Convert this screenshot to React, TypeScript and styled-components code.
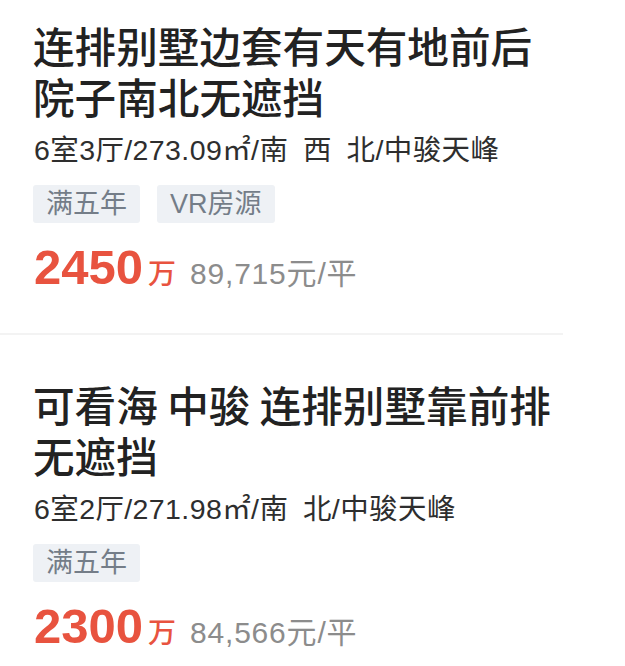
import React, { FC } from "react";
import styled, { createGlobalStyle } from "styled-components";

const GlobalStyle = createGlobalStyle`
  html, body {
    margin: 0;
    padding: 0;
    background: #ffffff;
  }
  body {
    font-family: "Liberation Sans", "Noto Sans CJK SC", sans-serif;
    -webkit-font-smoothing: antialiased;
  }
`;

const List = styled.div`
  width: 563px;
  padding-top: 20px;
`;

const Card = styled.div`
  display: flex;
  flex-direction: column;
  align-items: flex-start;
  padding: 0 0 40px 33px;
  border-bottom: 2px solid #f3f3f3;

  & + & {
    padding-top: 44px;
  }

  &:last-child {
    border-bottom: none;
  }
`;

const Title = styled.h2`
  margin: 0;
  width: 526px;
  font-family: "Noto Sans CJK SC", sans-serif;
  font-size: 41.6px;
  line-height: 51px;
  font-weight: 500;
  color: #222222;
`;

const Info = styled.p`
  margin: 10px 0 0 1px;
  font-size: 28.5px;
  line-height: 36px;
  letter-spacing: 0.4px;
  color: #2e2e2e;
  white-space: nowrap;
`;

const Tags = styled.div`
  display: flex;
  gap: 17px;
  margin-top: 17px;
`;

const Tag = styled.span`
  display: inline-block;
  height: 38px;
  padding: 0 13px;
  border-radius: 3px;
  background: #eef1f5;
  color: #747d88;
  font-size: 27px;
  line-height: 38px;
`;

const PriceRow = styled.div`
  display: flex;
  align-items: baseline;
  margin: 20px 0 0 1px;
`;

const Total = styled.span`
  font-size: 49px;
  line-height: 49px;
  font-weight: 700;
  color: #e8533f;
`;

const Unit = styled.span`
  margin-left: 5px;
  font-family: "Noto Sans CJK SC", sans-serif;
  font-size: 28px;
  font-weight: 500;
  color: #e8533f;
`;

const PerMeter = styled.span`
  margin-left: 14px;
  font-size: 30px;
  letter-spacing: 0.8px;
  color: #8c8c8c;
`;

interface IListing {
  title: string;
  info: string;
  tags: string[];
  total: string;
  perMeter: string;
}

const listings: IListing[] = [
  {
    title: "连排别墅边套有天有地前后院子南北无遮挡",
    info: "6室3厅/273.09㎡/南\u2002西\u2002北/中骏天峰",
    tags: ["满五年", "VR房源"],
    total: "2450",
    perMeter: "89,715元/平",
  },
  {
    title: "可看海 中骏 连排别墅靠前排无遮挡",
    info: "6室2厅/271.98㎡/南\u2002北/中骏天峰",
    tags: ["满五年"],
    total: "2300",
    perMeter: "84,566元/平",
  },
];

const App: FC = () => {
  return (
    <>
      <GlobalStyle />
      <List>
        {listings.map((item) => (
          <Card key={item.title}>
            <Title>{item.title}</Title>
            <Info>{item.info}</Info>
            <Tags>
              {item.tags.map((tag) => (
                <Tag key={tag}>{tag}</Tag>
              ))}
            </Tags>
            <PriceRow>
              <Total>{item.total}</Total>
              <Unit>万</Unit>
              <PerMeter>{item.perMeter}</PerMeter>
            </PriceRow>
          </Card>
        ))}
      </List>
    </>
  );
};

export default App;
